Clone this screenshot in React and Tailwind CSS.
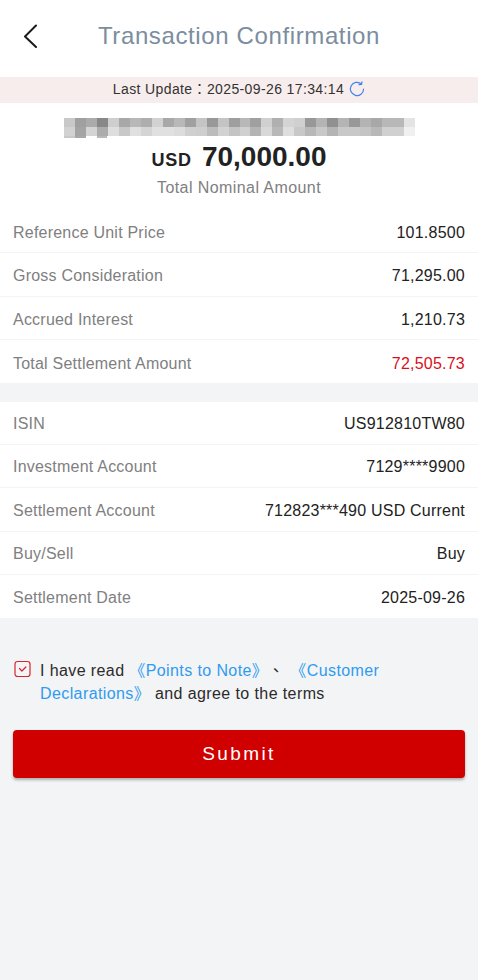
import React from "react";

const row1 = ["#c8c8c8","#a0a0a0","#ababab","#888888","#cecece","#a8a8a8","#b8b8b8","#aeaeae","#d2d2d2","#a8a8a8","#b8b8b8","#a0a0a0","#c4c4c4","#989898","#c4c4c4","#9e9e9e","#b8b8b8","#a0a0a0","#d0d0d0","#b0b0b0","#d4d4d4","#d0d0d0","#989898","#b4b4b4","#909090","#b4b4b4","#989898","#b4b4b4","#a8a8a8","#b8b8b8","#b8b8b8","#e4e4e4"];
const row2 = ["#d2d2d2","#a4a4a4","#d4d4d4","#acacac","#dedede","#c8c8c8","#e0e0e0","#d4d4d4","#e0e0e0","#e0e0e0","#dcdcdc","#d0d0d0","#cecece","#bcbcbc","#d2d2d2","#c4c4c4","#d0d0d0","#b4b4b4","#d8d8d8","#b8b8b8","#dedede","#c8c8c8","#b8b8b8","#c8c8c8","#b4b4b4","#c8c8c8","#c8c8c8","#c4c4c4","#b8b8b8","#d0d0d0","#d0d0d0","#f0f0f0"];

function Mosaic() {
  return (
    <svg width="351" height="20" viewBox="0 0 351 20" shapeRendering="crispEdges" className="block">
      {row1.map((c, i) => <rect key={"a" + i} x={i * 10.97} y="0" width="11" height="9" fill={c} />)}
      {row2.map((c, i) => <rect key={"b" + i} x={i * 10.97} y="9" width="11" height="9" fill={c} />)}
      <rect x="0" y="18" width="11" height="2" fill="#c8c8c8" />
      <rect x="11" y="18" width="11" height="2" fill="#a8a8a8" />
      <rect x="33" y="18" width="10" height="2" fill="#b8b8b8" />
    </svg>
  );
}

function Row({ label, value, valueClass = "text-[#222222]", last, low }) {
  return (
    <div className={"flex h-[43.3px] items-center justify-between px-[13px] text-[16px] tracking-[0.22px] " + (low ? "pt-[4px] " : "pt-[2px] ") + (last ? "" : "border-b border-[#f4f4f4]")}>
      <span className="text-[#808080]">{label}</span>
      <span className={valueClass}>{value}</span>
    </div>
  );
}

export default function App() {
  return (
    <div className="h-[980px] w-[478px] overflow-hidden bg-[#f3f4f6] font-['Liberation_Sans','Noto_Sans_CJK_TC',sans-serif]">
      <header className="relative flex h-[77px] items-center justify-center bg-white pb-[6px]">
        <svg className="absolute left-[23px] top-[24px]" width="15" height="24" viewBox="0 0 15 24" fill="none" stroke="#1a1a1a" strokeWidth="2" strokeLinecap="round" strokeLinejoin="round">
          <path d="M13 1.5 2 12.5 13 23" />
        </svg>
        <h1 className="text-[24px] font-normal tracking-[0.62px] text-[#7b8d9e]">Transaction Confirmation</h1>
      </header>
      <div className="flex h-[26px] items-center justify-center gap-[5px] bg-[#f8eded] pb-[2px] text-[14px] tracking-[0.38px] text-[#333333]">
        <span>Last Update：2025-09-26 17:34:14</span>
        <svg width="16" height="16" viewBox="0 0 16 16" fill="none" stroke="#3f82f0" strokeWidth="1.2" strokeLinecap="round" strokeLinejoin="round">
          <path d="M14.6 8A6.6 6.6 0 1 1 12.4 3" />
          <path d="M12.9 .8 12.6 3.4 10 3.6" />
        </svg>
      </div>
      <section className="flex h-[107px] flex-col items-center bg-white pt-[15px]">
        <Mosaic />
        <div className="mt-[-2px] flex items-baseline font-bold text-[#222222]">
          <span className="text-[18px] tracking-[0.8px]">USD</span>
          <span className="ml-[10px] text-[28px]">70,000.00</span>
        </div>
        <div className="mt-[-2px] text-[16px] tracking-[0.42px] text-[#808080]">Total Nominal Amount</div>
      </section>
      <section className="bg-white">
        <Row low label="Reference Unit Price" value="101.8500" />
        <Row low label="Gross Consideration" value="71,295.00" />
        <Row low label="Accrued Interest" value="1,210.73" />
        <Row low label="Total Settlement Amount" value="72,505.73" valueClass="text-[#d81020]" last />
      </section>
      <section className="mt-[18.6px] bg-white">
        <Row label="ISIN" value="US912810TW80" />
        <Row label="Investment Account" value="7129****9900" />
        <Row label="Settlement Account" value="712823***490 USD Current" />
        <Row label="Buy/Sell" value="Buy" />
        <Row label="Settlement Date" value="2025-09-26" last />
      </section>
      <section className="px-[13px] pt-[40.5px]">
        <div className="flex items-start gap-[8px]">
          <svg className="mt-[1px] shrink-0" width="19" height="18" viewBox="0 0 19 18" fill="none">
            <rect x="2" y="1.5" width="15" height="15" rx="2.5" stroke="#d9232e" strokeWidth="1.2" />
            <path d="M6.5 8.5 8.9 11 12.9 7" stroke="#d9232e" strokeWidth="1.2" strokeLinecap="round" strokeLinejoin="round" />
          </svg>
          <p className="text-[16px] leading-[23px] tracking-[0.4px] text-[#2b2b2b]">
            I have read <span className="text-[#2f9bf0]">《Points to Note》</span> <span className="ml-[-5px]">、</span> <span className="ml-[1px] text-[#2f9bf0]">《Customer Declarations》</span> and agree to the terms
          </p>
        </div>
        <button className="mt-[25px] flex h-[48px] w-full items-center justify-center rounded-[4px] bg-[#d00000] pt-[1px] text-[19px] tracking-[2.4px] text-white shadow-[0_2px_3px_rgba(0,0,0,0.3)]">
          Submit
        </button>
      </section>
    </div>
  );
}
